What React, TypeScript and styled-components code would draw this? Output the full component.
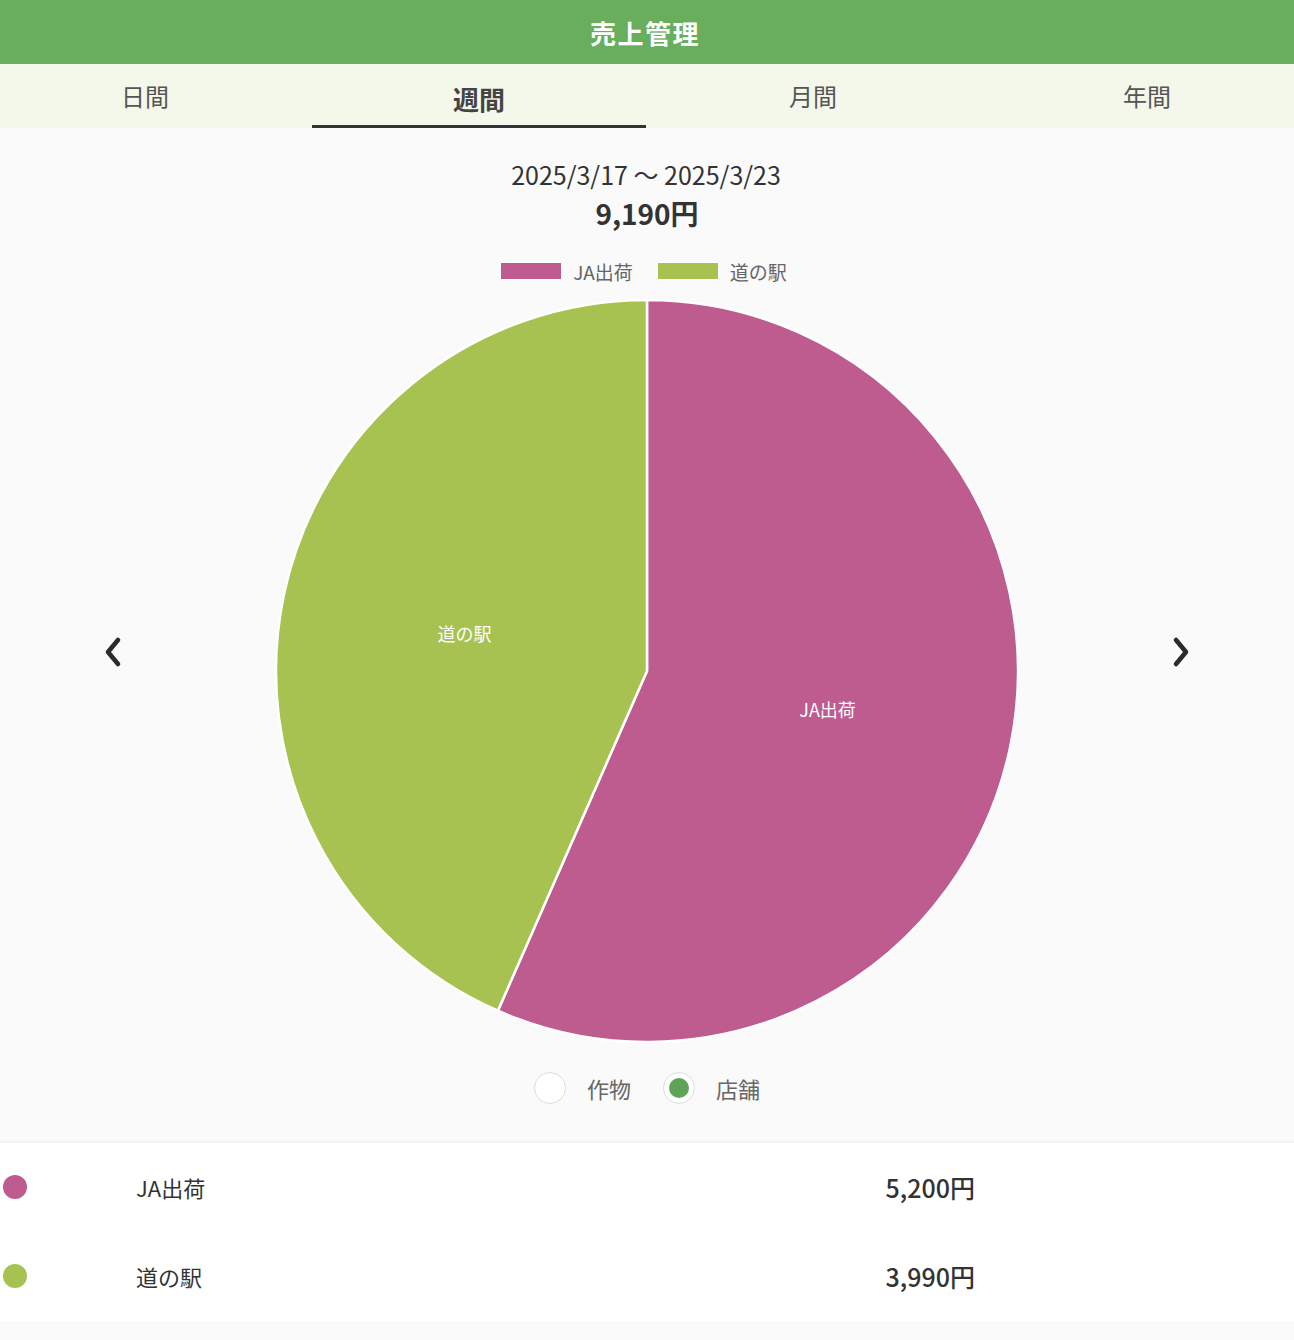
import React, { useState } from "react";
import styled, { createGlobalStyle } from "styled-components";

const Global = createGlobalStyle`
  html, body { margin: 0; padding: 0; background: #fafafa; }
  body { font-family: "Noto Sans CJK JP", "Noto Sans", sans-serif; overflow-x: hidden; }
  * { box-sizing: border-box; }
`;

const Page = styled.div`
  width: 1294px;
  overflow: hidden;
  background: #fafafa;
  padding-bottom: 20px;
`;

const Header = styled.header`
  height: 64px;
  background: #68ae5d;
  color: #fff;
  display: flex;
  align-items: center;
  justify-content: center;
  font-size: 26px;
  font-weight: 700;
  letter-spacing: 1.5px;
  padding-right: 4px;
`;

const TabBar = styled.nav`
  height: 64px;
  background: #f3f8ea;
  overflow: hidden;
`;

const TabTrack = styled.div`
  display: grid;
  grid-template-columns: repeat(4, 334px);
  margin-left: -22px;
  height: 100%;
`;

const Tab = styled.button<{ $active?: boolean }>`
  border: none;
  background: transparent;
  font-family: inherit;
  font-size: ${(p) => (p.$active ? "26px" : "24px")};
  font-weight: ${(p) => (p.$active ? 700 : 400)};
  color: ${(p) => (p.$active ? "#444" : "#555")};
  border-bottom: 3px solid ${(p) => (p.$active ? "#333" : "transparent")};
  padding: ${(p) => (p.$active ? "7px 0 0" : "2px 0 0")};
  cursor: pointer;
`;

const Content = styled.section`
  background: #fafafa;
  padding: 28px 0 37px;
  display: flex;
  flex-direction: column;
  align-items: center;
`;

const DateRange = styled.div`
  font-size: 25px;
  line-height: 36px;
  color: #333;
  padding-right: 2px;
`;

const Total = styled.div`
  font-size: 28px;
  font-weight: 700;
  line-height: 42px;
  color: #333;
`;

const Legend = styled.div`
  display: flex;
  gap: 24px;
  margin-top: 27px;
  height: 20px;
  align-items: center;
  padding-right: 7px;
`;

const LegendItem = styled.div`
  display: flex;
  align-items: center;
  gap: 11px;
  font-size: 19px;
  color: #666;
`;

const Swatch = styled.span<{ $color: string }>`
  width: 62px;
  height: 18px;
  background: ${(p) => p.$color};
  border: 1px solid #fff;
`;

const ChartRow = styled.div`
  width: 100%;
  display: grid;
  grid-template-columns: 26px 1fr 26px;
  align-items: center;
  padding: 0 101px;
  margin-top: 17px;
`;

const Arrow = styled.button`
  border: none;
  background: transparent;
  padding: 0;
  width: 26px;
  height: 32px;
  display: flex;
  align-items: center;
  justify-content: center;
  cursor: pointer;
  margin-top: -38px;
`;

const PieWrap = styled.div`
  display: flex;
  justify-content: center;
`;

const Radios = styled.div`
  display: flex;
  align-items: center;
  gap: 32px;
  margin-top: 28px;
`;

const RadioLabel = styled.label`
  display: flex;
  align-items: center;
  gap: 21px;
  font-size: 22px;
  color: #666;
  cursor: pointer;
`;

const RadioCircle = styled.span<{ $checked?: boolean }>`
  width: 32px;
  height: 32px;
  border-radius: 50%;
  background: #fff;
  border: 1px solid #ddd;
  display: flex;
  align-items: center;
  justify-content: center;
  &::after {
    content: "";
    width: 20px;
    height: 20px;
    border-radius: 50%;
    background: ${(p) => (p.$checked ? "#5ea357" : "transparent")};
  }
`;

const List = styled.ul`
  list-style: none;
  margin: 0;
  padding: 0;
  background: #fff;
  border-top: 2px solid #f3f3f3;
`;

const Row = styled.li`
  height: 88px;
  display: grid;
  grid-template-columns: 133px 1fr auto;
  align-items: center;
  padding: 0 319px 0 3px;
  &:last-child {
    height: 90px;
  }
`;

const Dot = styled.span<{ $color: string }>`
  width: 24px;
  height: 24px;
  border-radius: 50%;
  background: ${(p) => p.$color};
`;

const RowLabel = styled.span`
  font-size: 22px;
  color: #333;
`;

const Amount = styled.span`
  font-size: 25px;
  font-weight: 500;
  color: #333;
  text-align: right;
`;

const data = [
  { label: "JA出荷", value: 5200, color: "#be5b8f" },
  { label: "道の駅", value: 3990, color: "#a8c251" },
];

const Chevron = ({ dir }: { dir: "left" | "right" }) => (
  <svg width="22" height="32" viewBox="0 0 22 32">
    <path
      d={dir === "left" ? "M15 4 L5 16 L15 28" : "M7 4 L17 16 L7 28"}
      fill="none"
      stroke="#2b2b2b"
      strokeWidth="4.6"
      strokeLinecap="round"
      strokeLinejoin="round"
    />
  </svg>
);

const Pie = () => {
  const size = 746;
  const cx = size / 2;
  const cy = size / 2;
  const r = 371;
  const total = data.reduce((s, d) => s + d.value, 0);
  let start = 0;
  const slices = data.map((d) => {
    const frac = d.value / total;
    const a0 = start * 2 * Math.PI;
    const a1 = (start + frac) * 2 * Math.PI;
    start += frac;
    const x0 = cx + r * Math.sin(a0);
    const y0 = cy - r * Math.cos(a0);
    const x1 = cx + r * Math.sin(a1);
    const y1 = cy - r * Math.cos(a1);
    const large = frac > 0.5 ? 1 : 0;
    const mid = (a0 + a1) / 2;
    const lx = cx + (r / 2) * Math.sin(mid);
    const ly = cy - (r / 2) * Math.cos(mid);
    return {
      ...d,
      path: `M${cx} ${cy} L${x0} ${y0} A${r} ${r} 0 ${large} 1 ${x1} ${y1} Z`,
      lx,
      ly,
    };
  });
  return (
    <svg width={size} height={size} viewBox={`0 0 ${size} ${size}`}>
      {slices.map((s) => (
        <path key={s.label} d={s.path} fill={s.color} stroke="#fff" strokeWidth="2.5" strokeLinejoin="round" />
      ))}
      {slices.map((s) => (
        <text
          key={s.label + "t"}
          x={s.lx - 1}
          y={s.ly}
          fill="#fff"
          fontSize="18"
          fontWeight="400"
          textAnchor="middle"
          dominantBaseline="central"
          fontFamily='"Noto Sans CJK JP", sans-serif'
        >
          {s.label}
        </text>
      ))}
    </svg>
  );
};

export default function App() {
  const [tab, setTab] = useState(1);
  const [mode, setMode] = useState<"crop" | "store">("store");
  const tabs = ["日間", "週間", "月間", "年間"];
  return (
    <Page>
      <Global />
      <Header>売上管理</Header>
      <TabBar>
        <TabTrack>
          {tabs.map((t, i) => (
            <Tab key={t} $active={i === tab} onClick={() => setTab(i)}>
              {t}
            </Tab>
          ))}
        </TabTrack>
      </TabBar>
      <Content>
        <DateRange>2025/3/17 〜 2025/3/23</DateRange>
        <Total>9,190円</Total>
        <Legend>
          {data.map((d) => (
            <LegendItem key={d.label}>
              <Swatch $color={d.color} />
              {d.label}
            </LegendItem>
          ))}
        </Legend>
        <ChartRow>
          <Arrow aria-label="前へ">
            <Chevron dir="left" />
          </Arrow>
          <PieWrap>
            <Pie />
          </PieWrap>
          <Arrow aria-label="次へ">
            <Chevron dir="right" />
          </Arrow>
        </ChartRow>
        <Radios>
          <RadioLabel onClick={() => setMode("crop")}>
            <RadioCircle $checked={mode === "crop"} />
            作物
          </RadioLabel>
          <RadioLabel onClick={() => setMode("store")}>
            <RadioCircle $checked={mode === "store"} />
            店舗
          </RadioLabel>
        </Radios>
      </Content>
      <List>
        {data.map((d) => (
          <Row key={d.label}>
            <Dot $color={d.color} />
            <RowLabel>{d.label}</RowLabel>
            <Amount>{d.value.toLocaleString("ja-JP")}円</Amount>
          </Row>
        ))}
      </List>
    </Page>
  );
}
